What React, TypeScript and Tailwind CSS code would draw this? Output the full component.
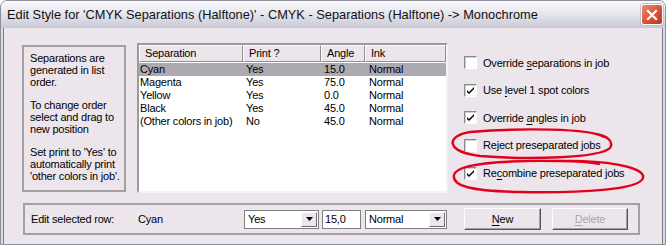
import React from "react";

const rows = [
  { sep: "Cyan", print: "Yes", angle: "15.0", ink: "Normal" },
  { sep: "Magenta", print: "Yes", angle: "75.0", ink: "Normal" },
  { sep: "Yellow", print: "Yes", angle: "0.0", ink: "Normal" },
  { sep: "Black", print: "Yes", angle: "45.0", ink: "Normal" },
  { sep: "(Other colors in job)", print: "No", angle: "45.0", ink: "Normal" },
];

function CheckBox({ checked }: { checked: boolean }) {
  return (
    <div className="w-[13px] h-[13px] shrink-0 bg-white border border-t-[#8a8a8a] border-l-[#8a8a8a] border-b-white border-r-white shadow-[inset_1px_1px_0_#d4d0c8] flex items-center justify-center">
      {checked && (
        <svg width="9" height="9" viewBox="0 0 9 9">
          <path d="M1 4 L3 6 L8 1 L8 3 L3 8 L1 6 Z" fill="#000" />
        </svg>
      )}
    </div>
  );
}

function DropArrow() {
  return (
    <div className="w-[16px] h-full bg-[#ece6ec] border border-t-white border-l-white border-b-[#6e6e6e] border-r-[#6e6e6e] flex items-center justify-center">
      <svg width="7" height="4" viewBox="0 0 7 4">
        <path d="M0 0 H7 L3.5 4 Z" fill="#000" />
      </svg>
    </div>
  );
}

function Combo({ value, width }: { value: string; width: string }) {
  return (
    <div className={`${width} h-[19px] bg-white border border-[#7f7f7f] flex items-stretch p-[1px]`}>
      <span className="flex-1 pl-[2px] leading-[15px]">{value}</span>
      <DropArrow />
    </div>
  );
}

function Option({ checked, children }: { checked: boolean; children: React.ReactNode }) {
  return (
    <div className="h-[27.6px] flex items-center gap-[6px]">
      <CheckBox checked={checked} />
      <span>{children}</span>
    </div>
  );
}

export default function App() {
  return (
    <div className="w-[666px] h-[245px] relative overflow-hidden bg-white font-['Liberation_Sans',Arial,sans-serif] text-[11px] text-black tracking-[-0.2px]">
      <div className="h-full flex flex-col rounded-t-[7px] border border-[#8d8d9c] bg-[#dcdce4]">
        {/* Title bar */}
        <div className="h-[27px] flex items-center justify-between pl-[6px] pr-[2px] rounded-t-[6px] bg-gradient-to-b from-[#fbfbfd] via-[#e4e4ec] to-[#c9c9d6]">
          <span className="text-[12.8px] tracking-[0px] text-[#111]">
            Edit Style for 'CMYK Separations (Halftone)' - CMYK - Separations (Halftone) -&gt; Monochrome
          </span>
          <div className="w-[22px] h-[21px] rounded-[3px] border border-white bg-gradient-to-br from-[#eb8a76] via-[#d9563c] to-[#b8361f] flex items-center justify-center shadow-[0_0_0_1px_#c0c0cc]">
            <svg width="12" height="12" viewBox="0 0 12 12">
              <path d="M2 2 L10 10 M10 2 L2 10" stroke="#fff" strokeWidth="2.2" strokeLinecap="square" />
            </svg>
          </div>
        </div>

        {/* Client area */}
        <div className="flex-1 mx-[2px] border-x border-[#7c7c8c] bg-[#ece6ec] pl-[18px] pt-[15px]">
          <div className="flex items-start">
            {/* Info */}
            <div className="mt-[2px] w-[104px] h-[147px] border-2 border-[#a3a0a3] pl-[6px] pt-[5px] leading-[12px]">
              <p>Separations are generated in list order.</p>
              <p className="mt-[11px]">To change order select and drag to new position</p>
              <p className="mt-[11px]">Set print to 'Yes' to automatically print 'other colors in job'.</p>
            </div>

            {/* List */}
            <div className="ml-[11px] w-[311px] h-[150px] bg-white border-2 border-t-[#9d9a9d] border-l-[#9d9a9d] border-b-[#f4f2f4] border-r-[#f4f2f4] flex flex-col">
              <div className="h-[17px] flex bg-[#ece6ec]">
                <div className="w-[104px] pl-[5px] leading-[15px] border border-t-white border-l-white border-b-[#8f8f8f] border-r-[#8f8f8f]">Separation</div>
                <div className="w-[78px] pl-[5px] leading-[15px] border border-t-white border-l-white border-b-[#8f8f8f] border-r-[#8f8f8f]">Print ?</div>
                <div className="w-[44px] pl-[5px] leading-[15px] border border-t-white border-l-white border-b-[#8f8f8f] border-r-[#8f8f8f]">Angle</div>
                <div className="flex-1 pl-[5px] leading-[15px] border border-t-white border-l-white border-b-[#8f8f8f] border-r-[#8f8f8f]">Ink</div>
              </div>
              <div className="pt-[1px]">
                {rows.map((r, i) => (
                  <div key={i} className={`h-[13px] flex leading-[13px] ${i === 0 ? "bg-[#acaab0]" : ""}`}>
                    <span className="w-[104px] pl-[1px]">{r.sep}</span>
                    <span className="w-[78px] pl-[3px]">{r.print}</span>
                    <span className="w-[44px] pl-[3px]">{r.angle}</span>
                    <span className="flex-1 pl-[4px]">{r.ink}</span>
                  </div>
                ))}
              </div>
            </div>

            {/* Options */}
            <div className="ml-[16px] pt-[6px] flex flex-col">
              <Option checked={false}>Override <u className="underline-offset-2">s</u>eparations in job</Option>
              <Option checked={true}>Use <u className="underline-offset-2">l</u>evel 1 spot colors</Option>
              <Option checked={true}>Override <u className="underline-offset-2">a</u>ngles in job</Option>
              <Option checked={false}>Reject preseparated jobs</Option>
              <Option checked={true}>Re<u className="underline-offset-2">c</u>ombine preseparated jobs</Option>
            </div>
          </div>

          {/* Edit selected row */}
          <div className="mt-[10px] ml-[1px] w-[617px] h-[32px] border-2 border-[#a3a0a3] flex items-center pl-[6px]">
            <span className="w-[107px]">Edit selected row:</span>
            <span className="w-[106px]">Cyan</span>
            <Combo value="Yes" width="w-[75px]" />
            <div className="ml-[3px] w-[39px] h-[19px] bg-white border border-[#7f7f7f] pl-[2px] leading-[17px]">15,0</div>
            <div className="ml-[4px]">
              <Combo value="Normal" width="w-[82px]" />
            </div>
            <button className="ml-[17px] w-[77px] h-[22px] bg-[#ece6ec] border border-t-white border-l-white border-b-[#555] border-r-[#555] shadow-[inset_-1px_-1px_0_#a0a0a0]">
              <u className="underline-offset-2">N</u>ew
            </button>
            <button className="ml-[11px] w-[76px] h-[22px] bg-[#ece6ec] text-[#a8a8a8] border border-t-white border-l-white border-b-[#555] border-r-[#555] shadow-[inset_-1px_-1px_0_#a0a0a0]">
              <u className="underline-offset-2">D</u>elete
            </button>
          </div>
        </div>
      </div>

      {/* Red annotation ellipses */}
      <svg className="absolute left-0 top-0 pointer-events-none" width="666" height="245">
        <path d="M604 137 C590 128 520 128 470 132 C445 136 446 152 480 156 C530 160 600 158 610 148 C614 142 608 136 596 134" fill="none" stroke="#e2001c" strokeWidth="2.4" />
        <path d="M560 161 C600 160 646 166 643 178 C640 190 580 193 520 192 C470 191 452 186 454 175 C456 164 500 160 560 161 C575 161 590 162 600 164" fill="none" stroke="#e2001c" strokeWidth="2.4" />
      </svg>
    </div>
  );
}
